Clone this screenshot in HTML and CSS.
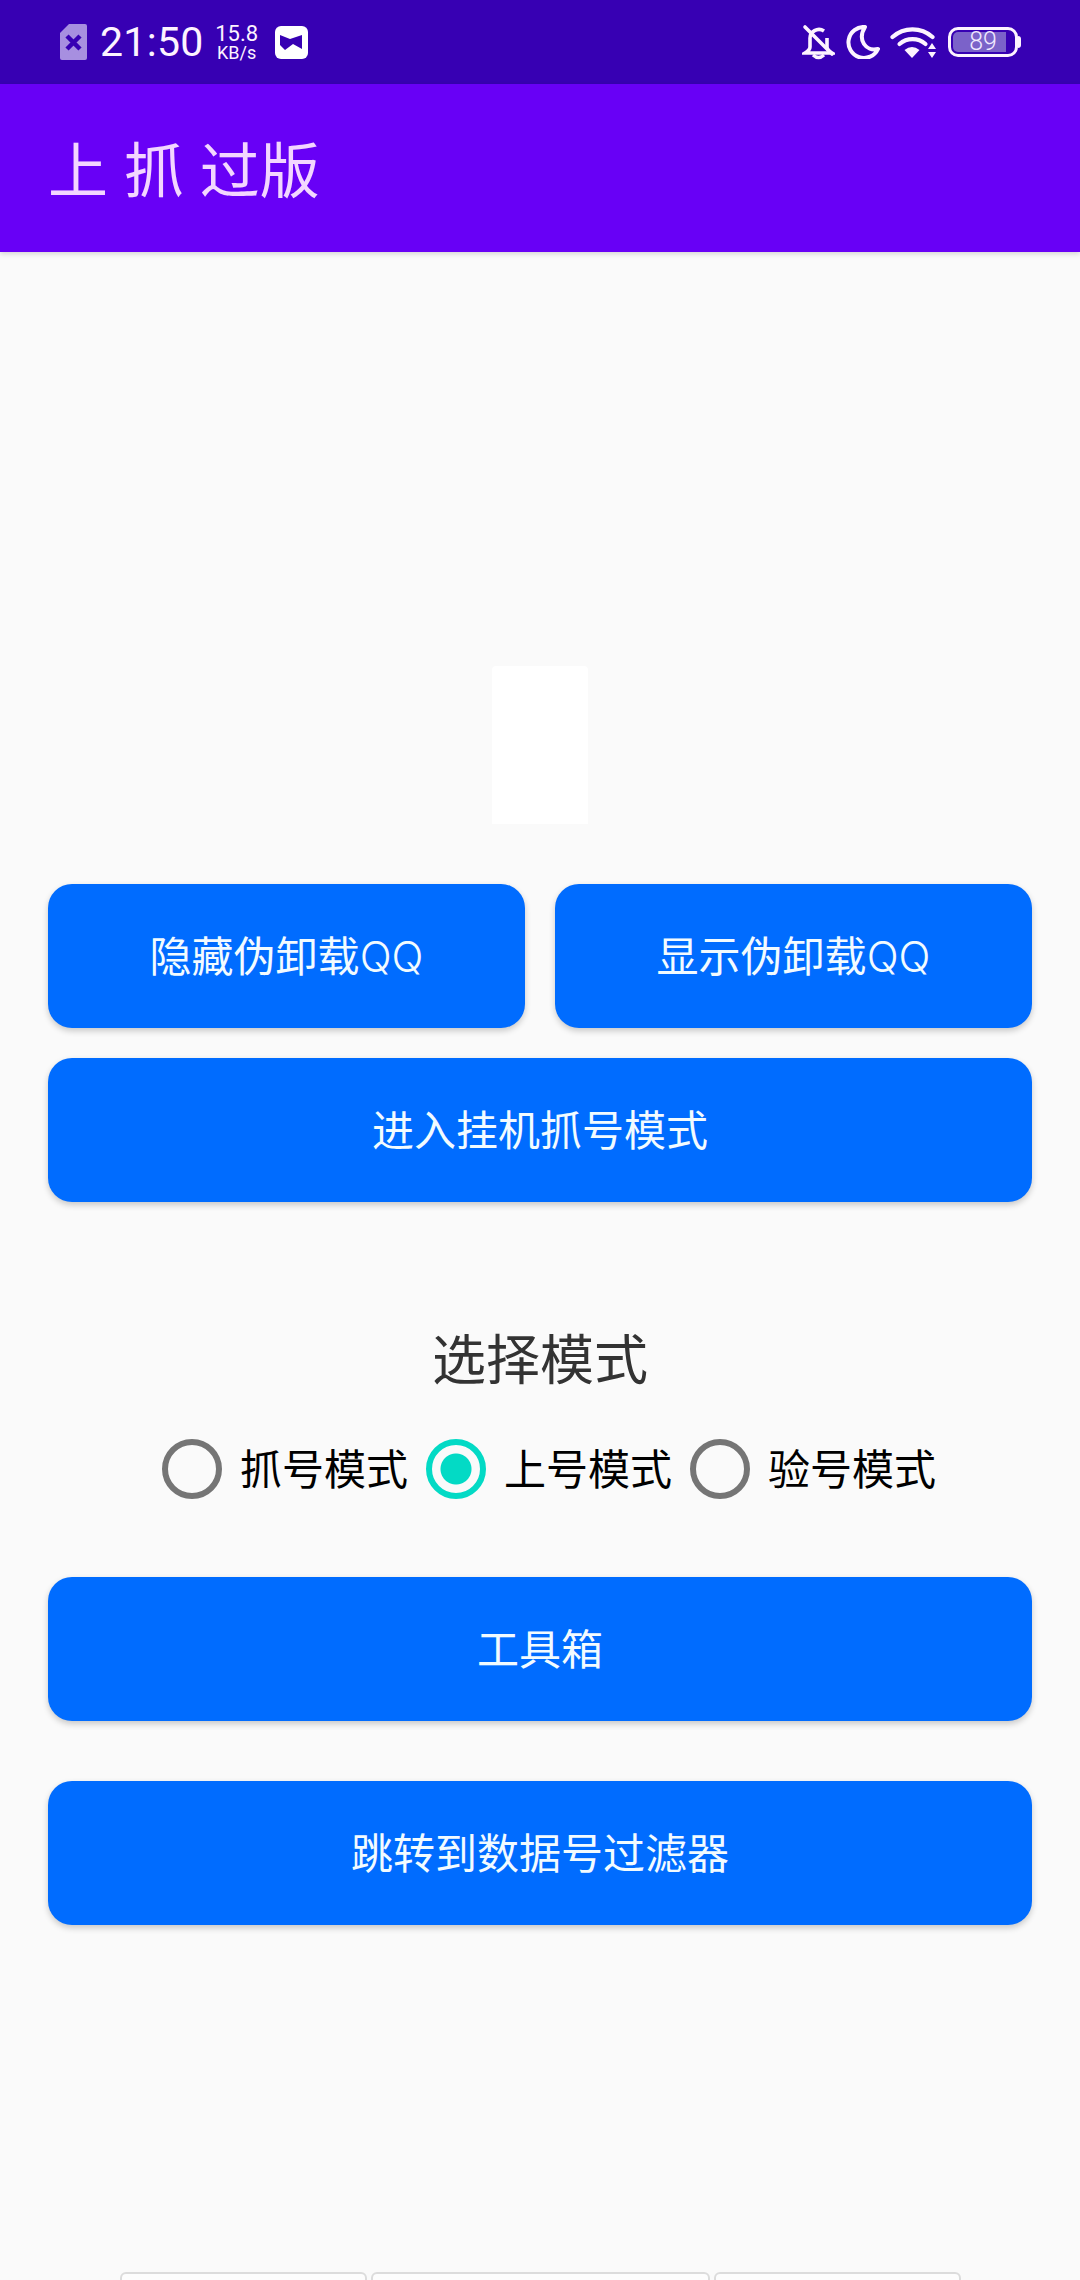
FILE: index.html
```html
<!DOCTYPE html>
<html lang="zh-CN">
<head>
    <meta charset="UTF-8">
    <meta name="viewport" content="width=device-width, initial-scale=1.0">
    <title>上 抓 过版</title>
    <link rel="stylesheet" href="styles.css">
</head>
<body>
    <div class="statusbar">
        <div class="status-left">
            <svg class="sim" width="27" height="36" viewBox="0 0 27 36">
                <path d="M9 0h16a2 2 0 0 1 2 2v32a2 2 0 0 1-2 2H2a2 2 0 0 1-2-2V9z" fill="#a78fe0"/>
                <path d="M7 12l13 13M20 12L7 25" stroke="#3700b3" stroke-width="4.5" fill="none"/>
            </svg>
            <span class="clock">21:50</span>
            <span class="speed"><span class="speed-num">15.8</span><span class="speed-unit">KB/s</span></span>
            <svg class="app-icon" width="33" height="33" viewBox="0 0 33 33">
                <rect width="33" height="33" rx="6" fill="#fff"/>
                <path d="M5 9l10 4 12-4v14l-9-5-8 6-5-5z" fill="#3700b3"/>
            </svg>
        </div>
        <div class="status-right">
            <svg class="bell" width="33" height="36" viewBox="0 0 33 36" fill="none" stroke="#fdf3ff" stroke-width="3.6">
                <path d="M8 23V15a9 9 0 0 1 14-8M25 14v9q0 3 5 6H3q5-3 5-6"/>
                <path d="M11 31q5.500 5 11 0" stroke-width="3.400"/>
                <path d="M3 3l27 27" stroke-linecap="round"/>
            </svg>
            <svg class="moon" width="34" height="34" viewBox="0 0 34 34" fill="none" stroke="#fdf3ff" stroke-width="4" stroke-linejoin="round">
                <path d="M19 2A15.500 15.500 0 1 0 32 24 C 20 27 11 15 19 2z"/>
            </svg>
            <svg class="wifi" width="46" height="34" viewBox="0 0 46 34" fill="none" stroke="#fdf3ff" stroke-width="4.200" stroke-linecap="round">
                <path d="M2.500 12a30 30 0 0 1 40 0"/>
                <path d="M9.500 19a20 20 0 0 1 26 0"/>
                <path d="M14.500 25q7.500-6 15 0l-7.500 8z" fill="#fdf3ff" stroke="none"/>
                <path d="M42 18l4 6h-8zM42 33l4-6h-8z" fill="#fdf3ff" stroke="none"/>
            </svg>
            <div class="battery">
                <div class="battery-body">
                    <span class="battery-num">89</span>
                </div>
                <div class="battery-tip"></div>
            </div>
        </div>
    </div>

    <div class="toolbar">
        <h1>上 抓 过版</h1>
    </div>

    <div class="content">
        <div class="blank-card"></div>

        <div class="btn-row">
            <button class="btn">隐藏伪卸载<span class="latin">QQ</span></button>
            <button class="btn">显示伪卸载<span class="latin">QQ</span></button>
        </div>
        <button class="btn btn-wide">进入挂机抓号模式</button>

        <h2 class="mode-title">选择模式</h2>
        <div class="radio-group">
            <div class="radio-item"><span class="radio"></span><span class="radio-text">抓号模式</span></div>
            <div class="radio-item"><span class="radio checked"></span><span class="radio-text">上号模式</span></div>
            <div class="radio-item"><span class="radio"></span><span class="radio-text">验号模式</span></div>
        </div>

        <button class="btn btn-tools">工具箱</button>
        <button class="btn btn-filter">跳转到数据号过滤器</button>
    </div>

    <div class="bottom-tabs">
        <div class="tab tab-a"></div>
        <div class="tab tab-b"></div>
        <div class="tab tab-c"></div>
    </div>
</body>
</html>
```

FILE: styles.css
```css
* {
    box-sizing: border-box;
}
html, body {
    margin: 0;
    height: 2280px;
    overflow: hidden;
}
body {
    width: 1080px;
    background-color: #fafafa;
    font-family: Roboto, "Noto Sans CJK SC", sans-serif;
    color: #000;
}

.statusbar {
    height: 84px;
    background-color: #3700b3;
    color: #fdf3ff;
    display: flex;
    justify-content: space-between;
    align-items: center;
    padding: 0 59px 0 60px;
}
.status-left, .status-right {
    display: flex;
    align-items: center;
}
.clock {
    font-size: 41px;
    margin-left: 13px;
    letter-spacing: 0.3px;
}
.speed {
    display: flex;
    flex-direction: column;
    align-items: center;
    margin-left: 11px;
    width: 44px;
}
.speed-num {
    font-size: 22px;
    line-height: 21px;
}
.speed-unit {
    font-size: 18px;
    line-height: 18px;
}
.app-icon {
    margin-left: 16px;
}
.status-right {
    gap: 11px;
}
.bell {
    margin-right: -2px;
}
.moon {
    margin-left: 2px;
    margin-right: -1px;
}
.battery {
    display: flex;
    align-items: center;
    margin-left: 1px;
}
.battery-body {
    width: 70px;
    height: 30px;
    border: 3px solid #fdf3ff;
    border-radius: 10px;
    display: flex;
    justify-content: center;
    align-items: center;
    background: linear-gradient(90deg, #7b62c9 0, #7b62c9 86%, transparent 86%);
    background-clip: content-box;
    padding: 2px;
}
.battery-num {
    font-size: 25px;
    line-height: 20px;
    font-weight: 300;
    color: #f0e8ff;
}
.battery-tip {
    width: 3px;
    height: 12px;
    background-color: #fdf3ff;
    border-radius: 0 3px 3px 0;
}

.toolbar {
    height: 168px;
    background-color: #6800f6;
    padding: 0 0 4px 48px;
    display: flex;
    align-items: center;
    box-shadow: 0 2px 5px rgba(0, 0, 0, 0.15);
    position: relative;
}
.toolbar h1 {
    margin: 0;
    font-size: 60px;
    font-weight: 400;
    color: #f3d6ff;
    word-spacing: 1px;
}

.content {
    padding: 0 48px;
    display: flex;
    flex-direction: column;
}
.blank-card {
    width: 96px;
    height: 158px;
    margin: 414px auto 60px;
    background-color: #fff;
    border-radius: 4px 4px 0 0;
}
.btn {
    height: 144px;
    border: none;
    border-radius: 24px;
    background-color: #006cff;
    color: #f2fbff;
    font-family: inherit;
    font-size: 42px;
    padding: 0 0 5px;
    box-shadow: 0 3px 6px rgba(0, 0, 0, 0.2);
}
.latin {
    font-family: Inter, sans-serif;
    font-weight: 300;
}
.btn-row {
    display: flex;
    gap: 30px;
    margin-bottom: 30px;
}
.btn-row .btn {
    flex: 1;
}
.mode-title {
    margin: 124px 0 41px;
    height: 72px;
    line-height: 72px;
    font-size: 54px;
    font-weight: 400;
    color: #333;
    text-align: center;
}
.radio-group {
    display: flex;
    justify-content: center;
    height: 60px;
    margin-bottom: 78px;
}
.radio-item {
    width: 264px;
    padding-left: 18px;
    display: flex;
    align-items: center;
    gap: 18px;
    font-size: 42px;
    white-space: nowrap;
}
.radio-text {
    line-height: 50px;
    padding-top: 3px;
}
.radio {
    flex: none;
    width: 60px;
    height: 60px;
    border: 6px solid #757575;
    border-radius: 50%;
}
.radio.checked {
    border-color: #03dac5;
    background: radial-gradient(circle, #03dac5 0, #03dac5 15px, #fafafa 16px);
}
.btn-tools {
    margin-bottom: 60px;
}

.bottom-tabs {
    display: flex;
    margin: 347px 0 0 120px;
    gap: 4px;
}
.tab {
    height: 60px;
    background-color: #fdfdfd;
    border: 2px solid #dcdcdc;
    border-radius: 6px 6px 0 0;
}
.tab-a {
    width: 247px;
}
.tab-b {
    width: 339px;
}
.tab-c {
    width: 247px;
}
```
